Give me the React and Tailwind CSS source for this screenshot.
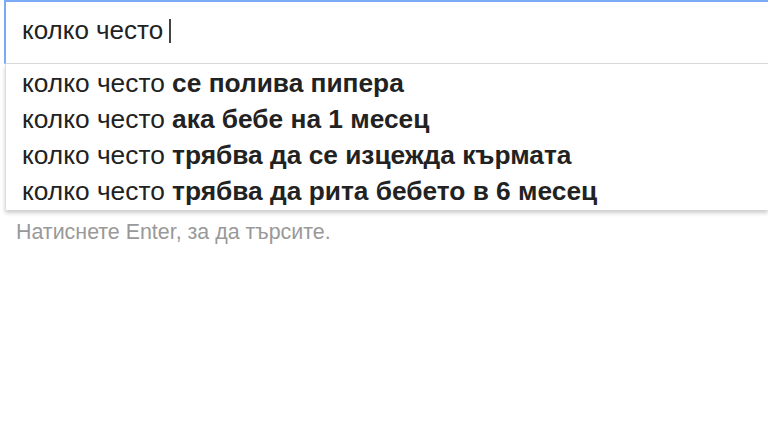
import React from 'react';

const prefix = 'колко често';
const suggestions = [
  'се полива пипера',
  'ака бебе на 1 месец',
  'трябва да се изцежда кърмата',
  'трябва да рита бебето в 6 месец',
];

const App = () => {
  return (
    <div className="w-[768px] h-[432px] bg-white overflow-hidden" style={{ fontFamily: '"Liberation Sans", Arial, sans-serif' }}>
      <div className="ml-[4px] h-[64px] border-t-2 border-l-2 border-[#7baaf7] border-b border-b-[#d9d9d9] flex items-center pl-[16px] pb-[4px]">
        <span className="text-[26px] text-[#222]">{prefix}</span>
        <span className="ml-[6px] w-[2px] h-[24px] bg-[#444]" />
      </div>
      <div className="ml-[5px] border-l border-[#ddd] shadow-[0_3px_4px_rgba(0,0,0,0.2)] pt-[1px] pb-[1px] pl-[16px]">
        {suggestions.map((s) => (
          <div key={s} className="h-[36px] flex items-center text-[26.3px] text-[#222] leading-none">
            <span>{prefix}&nbsp;</span>
            <span className="font-bold">{s}</span>
          </div>
        ))}
      </div>
      <div className="pl-[16px] pt-[12px] text-[21.4px] leading-none text-[#999]">Натиснете Enter, за да търсите.</div>
    </div>
  );
};

export default App;
